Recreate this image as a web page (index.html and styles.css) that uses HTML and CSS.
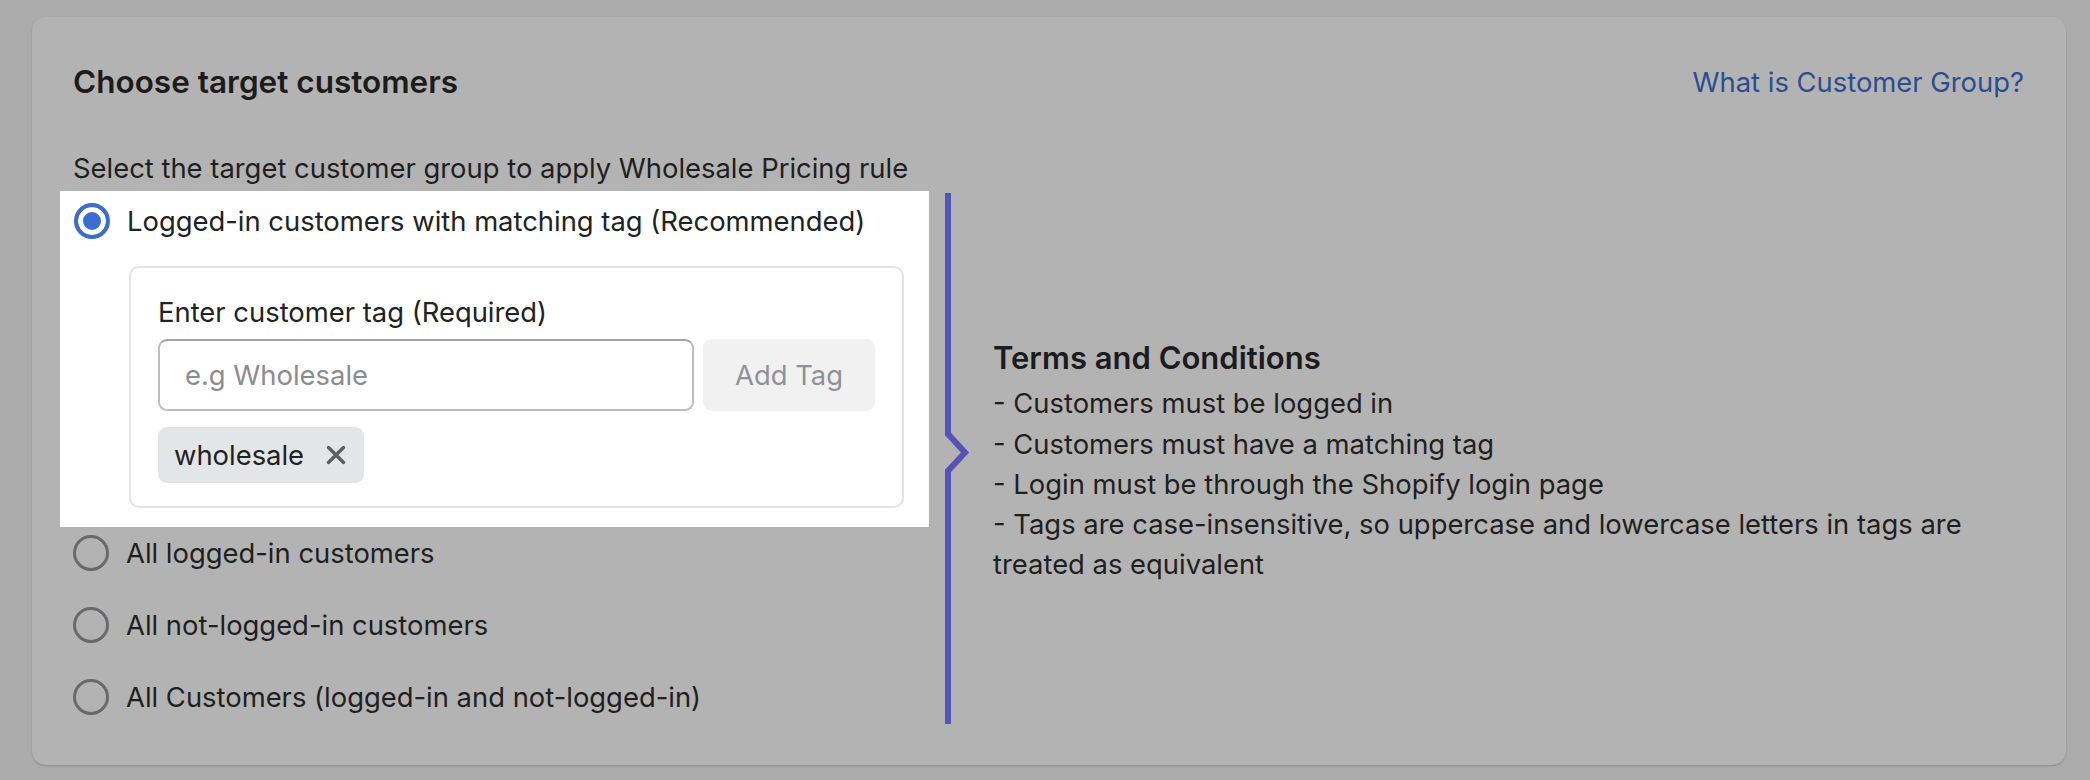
FILE: index.html
```html
<!DOCTYPE html>
<html lang="en">
<head>
    <meta charset="UTF-8">
    <meta name="viewport" content="width=device-width, initial-scale=1.0">
    <title>Choose target customers</title>
    <link rel="stylesheet" href="styles.css">
</head>
<body>
    <div class="card">
        <div class="card-header">
            <h2 class="card-title">Choose target customers</h2>
            <a class="help-link" href="#">What is Customer Group?</a>
        </div>

        <p class="hint">Select the target customer group to apply Wholesale Pricing rule</p>

        <div class="target-body">
            <div class="options">
                <div class="option-highlight">
                    <label class="option">
                        <span class="radio checked"></span>
                        Logged-in customers with matching tag (Recommended)
                    </label>

                    <div class="tag-box">
                        <div class="tag-label">Enter customer tag (Required)</div>
                        <div class="tag-input-row">
                            <input type="text" class="tag-input" placeholder="e.g Wholesale">
                            <button class="add-tag">Add Tag</button>
                        </div>
                        <div class="tag-list">
                            <span class="tag">
                                wholesale
                                <svg class="tag-remove" width="20" height="20" viewBox="0 0 20 20">
                                    <path d="M2.5 2.5 L17.5 17.5 M17.5 2.5 L2.5 17.5" stroke="currentColor" stroke-width="3.4" stroke-linecap="round" fill="none"/>
                                </svg>
                            </span>
                        </div>
                    </div>
                </div>

                <label class="option"><span class="radio"></span>All logged-in customers</label>
                <label class="option"><span class="radio"></span>All not-logged-in customers</label>
                <label class="option"><span class="radio"></span>All Customers (logged-in and not-logged-in)</label>
            </div>

            <!-- popover edge with its arrow -->
            <div class="divider">
                <span class="divider-line top"></span>
                <svg class="divider-arrow" width="26" height="41" viewBox="0 0 26 41">
                    <path d="M3 0 L3 2 L20 20.5 L3 39 L3 41" stroke="#5552b8" stroke-width="6" fill="none"/>
                </svg>
                <span class="divider-line bottom"></span>
            </div>

            <div class="terms">
                <h3 class="terms-title">Terms and Conditions</h3>
                <p>- Customers must be logged in</p>
                <p>- Customers must have a matching tag</p>
                <p>- Login must be through the Shopify login page</p>
                <p>- Tags are case-insensitive, so uppercase and lowercase letters in tags are treated as equivalent</p>
            </div>
        </div>
    </div>
</body>
</html>
```

FILE: styles.css
```css
body {
    margin: 0;
    background-color: #ababab;
    font-family: Inter, "Noto Sans", sans-serif;
    font-size: 27.4px;
    color: #1f1f1f;
}

.card {
    margin: 17px 24px 15px 32px;
    padding: 45px 42px 41px 41px;
    background-color: #b3b3b3;
    border-radius: 14px;
    box-shadow: 0 1px 2px rgba(0, 0, 0, 0.18);
}

.card-header {
    display: flex;
    justify-content: space-between;
    align-items: center;
    height: 40px;
}

.card-title {
    margin: 0;
    font-size: 31.5px;
    font-weight: 600;
    line-height: 40px;
    color: #1c1c1c;
}

.help-link {
    color: #2a4e91;
    text-decoration: none;
    line-height: 40px;
    font-size: 27.4px;
}

.hint {
    margin: 46px 0 3px;
    line-height: 40px;
    color: #1f1f1f;
}

.target-body {
    display: flex;
}

.options {
    width: 856px;
    flex-shrink: 0;
    display: flex;
    flex-direction: column;
    gap: 36px;
    padding-bottom: 9px;
}

.option-highlight {
    margin: 0 0 -28px -13px;
    padding: 12px 25px 19px 14px;
    background-color: #fff;
    color: #202223;
}

.option {
    display: flex;
    align-items: center;
    gap: 17px;
    height: 36px;
    line-height: 36px;
}

.radio {
    width: 36px;
    height: 36px;
    box-sizing: border-box;
    border-radius: 50%;
    border: 3.5px solid #68696c;
    flex-shrink: 0;
}

.radio.checked {
    border: 4px solid #3b6dd0;
    background-color: #3b6dd0;
    box-shadow: inset 0 0 0 5px #fff;
}

.tag-box {
    margin: 27px 0 0 55px;
    padding: 24px 27px 23px 27px;
    border: 2px solid #e3e3e3;
    border-radius: 10px;
}

.tag-label {
    line-height: 40px;
    margin-bottom: 7px;
}

.tag-input-row {
    display: flex;
    gap: 9px;
}

.tag-input {
    flex: 1;
    height: 72px;
    box-sizing: border-box;
    padding: 0 25px;
    font-family: inherit;
    font-size: 27.4px;
    border: 2px solid #bdbdbd;
    border-top-color: #a3a3a3;
    border-radius: 9px;
    outline: none;
}

.tag-input::placeholder {
    color: #8c8c8c;
}

.add-tag {
    width: 172px;
    height: 72px;
    font-family: inherit;
    font-size: 27.4px;
    color: #8f9196;
    background-color: #f1f1f1;
    border: none;
    border-radius: 9px;
}

.tag-list {
    margin-top: 16px;
    display: flex;
}

.tag {
    display: flex;
    align-items: center;
    gap: 22px;
    height: 56px;
    padding: 0 18px 0 16px;
    background-color: #e4e5e7;
    border-radius: 9px;
    color: #202223;
}

.tag-remove {
    color: #5c5f62;
}

.divider {
    margin: 2px 0 0 16px;
    width: 26px;
    flex-shrink: 0;
    display: flex;
    flex-direction: column;
}

.divider-line {
    width: 6px;
    background-color: #5552b8;
}

.divider-line.top {
    flex: 241;
}

.divider-line.bottom {
    flex: 253;
}

.divider-arrow {
    display: block;
}

.terms {
    flex: 1;
    align-self: center;
    padding: 8px 0 0 22px;
    color: #1f1f1f;
}

.terms-title {
    margin: 0 0 5px;
    font-size: 31px;
    font-weight: 600;
    line-height: 40px;
    color: #1c1c1c;
}

.terms p {
    margin: 0;
    line-height: 40.3px;
}
```
